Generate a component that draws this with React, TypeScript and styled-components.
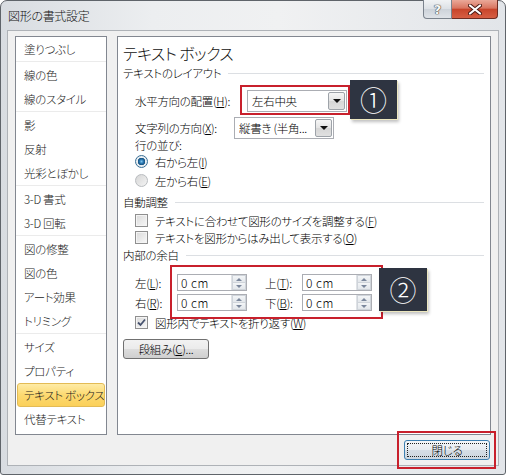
import { styled, createGlobalStyle } from "styled-components";

const Global = createGlobalStyle`
  html, body {
    margin: 0;
    padding: 0;
    background: #ffffff;
  }
  body {
    font-family: "Noto Sans CJK JP", "Noto Sans", sans-serif;
    font-size: 11.5px;
    font-weight: 300;
    letter-spacing: -0.3px;
    font-feature-settings: "palt";
    color: #000;
  }
`;

const Window = styled.div`
  position: relative;
  width: 506px;
  height: 475px;
  box-sizing: border-box;
  border: 1px solid #5f646a;
  border-radius: 7px 7px 3px 3px;
  background: linear-gradient(
    90deg,
    #d8dce1 0%,
    #eceef0 30%,
    #f0f1f2 55%,
    #e2e5e9 100%
  );
  padding: 0 6px 8px 6px;
  display: flex;
  flex-direction: column;
`;

const TitleBar = styled.div`
  height: 29px;
  display: flex;
  align-items: flex-start;
  justify-content: space-between;
`;

const Title = styled.div`
  line-height: 29px;
  padding-left: 1px;
  font-size: 12px;
  color: #111;
`;

const Caption = styled.div`
  display: flex;
  margin-top: -1px;
  margin-right: 1px;
`;

const HelpButton = styled.div`
  width: 29px;
  height: 19px;
  box-sizing: border-box;
  border: 1px solid #7b838d;
  border-top: none;
  border-radius: 0 0 0 4px;
  background: linear-gradient(#f1f3f5, #dde1e6 48%, #cdd3da 52%, #dfe3e8);
  display: flex;
  align-items: center;
  justify-content: center;
  font-family: "DejaVu Sans", sans-serif;
  font-weight: bold;
  font-size: 13px;
  letter-spacing: 0;
  color: #f8f8f8;
  text-shadow: 0 0 1px #444, 0 0 1px #444, 0 0 1px #444;
`;

const CloseButton = styled.div`
  width: 46px;
  height: 19px;
  box-sizing: border-box;
  border: 1px solid #6e2c22;
  border-left: none;
  border-top: none;
  border-radius: 0 0 4px 0;
  background: linear-gradient(#eaa999, #d97560 45%, #c8452b 52%, #d65e43);
  display: flex;
  align-items: center;
  justify-content: center;
`;

const Client = styled.div`
  flex: 1;
  border: 1px solid #aeb2b7;
  background: #f0f0f0;
  padding: 5px 7px 0 7px;
  display: flex;
  flex-direction: column;
`;

const Body = styled.div`
  height: 399px;
  display: flex;
  gap: 10px;
`;

const CategoryList = styled.div`
  width: 92px;
  box-sizing: border-box;
  border: 1px solid #828790;
  background: #fff;
`;

const Group = styled.div`
  & + & {
    border-top: 1px solid #ebebeb;
    padding-top: 1px;
  }
`;

const Category = styled.div<{ $selected?: boolean }>`
  height: 24px;
  box-sizing: border-box;
  margin: 0 1px;
  padding-left: 6px;
  line-height: 22px;
  border: 1px solid ${(p) => (p.$selected ? "#e3bb55" : "transparent")};
  border-radius: 3px;
  background: ${(p) =>
    p.$selected ? "linear-gradient(#feeba6, #fcd970 50%, #fbd05a)" : "none"};
  color: #1b1b1b;
  white-space: nowrap;
  overflow: hidden;
`;

const Panel = styled.div`
  flex: 1;
  box-sizing: border-box;
  border: 1px solid #828790;
  background: #fff;
  padding: 5px 6px 0 5px;
  display: flex;
  flex-direction: column;
`;

const Heading = styled.div`
  height: 22px;
  line-height: 22px;
  font-size: 16px;
  letter-spacing: -0.6px;
  color: #111;
`;

const Section = styled.div<{ $mt?: number }>`
  height: 18px;
  margin-top: ${(p) => p.$mt ?? 0}px;
  display: flex;
  align-items: center;
  gap: 7px;
  white-space: nowrap;
  &::after {
    content: "";
    flex: 1;
    height: 1px;
    background: #dcdfe3;
  }
`;

const Row = styled.div<{ $mt?: number }>`
  height: 22px;
  margin-top: ${(p) => p.$mt ?? 0}px;
  margin-left: 12px;
  display: flex;
  align-items: center;
  white-space: nowrap;
`;

const RowLabel = styled.span<{ $w: number }>`
  width: ${(p) => p.$w}px;
  flex-shrink: 0;
`;

const OptionRow = styled.label<{ $mt?: number; $h?: number }>`
  height: ${(p) => p.$h ?? 17}px;
  margin-top: ${(p) => p.$mt ?? 0}px;
  margin-left: 12px;
  display: flex;
  align-items: center;
  gap: 7px;
  white-space: nowrap;
`;

const SubLabel = styled.div`
  height: 13px;
  line-height: 13px;
  margin-left: 12px;
`;

const Key = styled.span`
  text-decoration: underline;
  text-underline-offset: 1px;
`;

const Select = styled.div<{ $w: number }>`
  width: ${(p) => p.$w}px;
  height: 22px;
  box-sizing: border-box;
  border: 1px solid #abadb3;
  background: #fff;
  display: flex;
  align-items: center;
  padding: 1px 1px 1px 4px;
`;

const SelectText = styled.span`
  flex: 1;
  overflow: hidden;
  white-space: nowrap;
`;

const ArrowButton = styled.span`
  width: 17px;
  height: 18px;
  box-sizing: border-box;
  border: 1px solid #9ea3a9;
  border-radius: 2px;
  background: linear-gradient(#f6f6f6, #e4e4e4 50%, #d6d6d6 51%, #e0e0e0);
  display: flex;
  align-items: center;
  justify-content: center;
  &::before {
    content: "";
    border-left: 4px solid transparent;
    border-right: 4px solid transparent;
    border-top: 4px solid #111;
  }
`;

const Radio = styled.span<{ $on?: boolean }>`
  width: 13px;
  height: 13px;
  box-sizing: border-box;
  border-radius: 50%;
  border: 1px solid ${(p) => (p.$on ? "#3a6f95" : "#b9bcbf")};
  background: ${(p) =>
    p.$on
      ? "radial-gradient(circle, #7fc3ec 0, #2a77b0 2px, #17507d 3.5px, #e9eef2 4px)"
      : "linear-gradient(135deg, #d6d6d6, #f4f4f4)"};
`;

const Check = styled.span`
  width: 13px;
  height: 13px;
  box-sizing: border-box;
  border: 1px solid #8f8f8f;
  background: linear-gradient(135deg, #d9d9d9, #f8f8f8);
  box-shadow: inset 0 0 0 1px #f4f4f4;
  display: flex;
  align-items: center;
  justify-content: center;
`;

const SpinGrid = styled.div<{ $mt: number }>`
  margin-top: ${(p) => p.$mt}px;
  margin-left: 12px;
  height: 17px;
  display: grid;
  grid-template-columns: 42px 88px 37px 70px;
  align-items: center;
  white-space: nowrap;
`;

const SpinBox = styled.div`
  width: 70px;
  height: 17px;
  box-sizing: border-box;
  border: 1px solid #abadb3;
  background: #fff;
  display: flex;
  align-items: stretch;
`;

const SpinText = styled.span`
  flex: 1;
  padding-left: 3px;
  line-height: 15px;
  font-size: 12px;
  letter-spacing: 0.5px;
`;

const Spinner = styled.span`
  width: 14px;
  display: flex;
  flex-direction: column;
  border-left: 1px solid #dfe2e6;
`;

const SpinHalf = styled.span<{ $down?: boolean }>`
  flex: 1;
  background: linear-gradient(#f3f5f7, #e3e7eb);
  border: 1px solid #cfd4da;
  ${(p) => (p.$down ? "border-top: none;" : "")}
  display: flex;
  align-items: center;
  justify-content: center;
  &::before {
    content: "";
    border-left: 3px solid transparent;
    border-right: 3px solid transparent;
    ${(p) =>
      p.$down ? "border-top: 3px solid #7b879c;" : "border-bottom: 3px solid #7b879c;"}
  }
`;

const PushButton = styled.div<{ $w: number; $mt?: number; $default?: boolean }>`
  width: ${(p) => p.$w}px;
  height: 20px;
  margin-top: ${(p) => p.$mt ?? 0}px;
  box-sizing: border-box;
  border: 1px solid ${(p) => (p.$default ? "#3c7fb1" : "#707070")};
  border-radius: 3px;
  background: ${(p) =>
    p.$default
      ? "linear-gradient(#f3f6f9, #e6ebf0 50%, #d6dee6 51%, #ccd6df)"
      : "linear-gradient(#f2f2f2, #ebebeb 50%, #dddddd 51%, #cfcfcf)"};
  display: flex;
  padding: 2px;
  white-space: nowrap;
`;

const ButtonFace = styled.span<{ $focus?: boolean }>`
  flex: 1;
  display: flex;
  align-items: center;
  justify-content: center;
  border: 1px dotted ${(p) => (p.$focus ? "#222" : "transparent")};
  line-height: 14px;
`;

const Footer = styled.div`
  flex: 1;
  display: flex;
  justify-content: flex-end;
  align-items: flex-start;
  padding: 5px 1px 0 0;
`;

const Marker = styled.div`
  position: absolute;
  box-sizing: border-box;
  border: 2px solid #c8202c;
  pointer-events: none;
`;

const Callout = styled.div`
  position: absolute;
  box-sizing: border-box;
  background: #2e3441;
  color: #fff;
  display: flex;
  align-items: center;
  justify-content: center;
  font-size: 27px;
  font-weight: 300;
  letter-spacing: 0;
  box-shadow: 1px 1px 0 #ece7bf, 2px 3px 3px rgba(0, 0, 0, 0.25);
`;

const groups = [
  ["塗りつぶし"],
  ["線の色", "線のスタイル"],
  ["影", "反射", "光彩とぼかし"],
  ["3-D 書式", "3-D 回転"],
  ["図の修整", "図の色", "アート効果", "トリミング"],
  ["サイズ", "プロパティ", "テキスト ボックス", "代替テキスト"],
];

const selected = "テキスト ボックス";

// annotation boxes, in window coordinates
const markers = [
  { x: 240, y: 85, w: 110, h: 30 },
  { x: 170, y: 265, w: 213, h: 54 },
  { x: 397, y: 431, w: 99, h: 38 },
];

const callouts = [
  { x: 350, y: 80, w: 47, h: 39, label: "①" },
  { x: 379, y: 268, w: 48, h: 43, label: "②" },
];

function CheckMark() {
  return (
    <svg width="9" height="9" viewBox="0 0 9 9">
      <path
        d="M1 4.5 L3.5 7 L8 1.5"
        fill="none"
        stroke="#46526e"
        strokeWidth="1.8"
      />
    </svg>
  );
}

function Spin({ value }: { value: string }) {
  return (
    <SpinBox>
      <SpinText>{value}</SpinText>
      <Spinner>
        <SpinHalf />
        <SpinHalf $down />
      </Spinner>
    </SpinBox>
  );
}

export default function App() {
  return (
    <>
      <Global />
      <Window>
        <TitleBar>
          <Title>図形の書式設定</Title>
          <Caption>
            <HelpButton>?</HelpButton>
            <CloseButton>
              <svg width="14" height="11" viewBox="0 0 14 11">
                <path
                  d="M2 1.5 L12 9.5 M12 1.5 L2 9.5"
                  stroke="#4a1a14"
                  strokeWidth="4"
                  strokeLinecap="round"
                />
                <path
                  d="M2 1.5 L12 9.5 M12 1.5 L2 9.5"
                  stroke="#fff"
                  strokeWidth="2.2"
                  strokeLinecap="round"
                />
              </svg>
            </CloseButton>
          </Caption>
        </TitleBar>

        <Client>
          <Body>
            <CategoryList>
              {groups.map((g, i) => (
                <Group key={i}>
                  {g.map((name) => (
                    <Category key={name} $selected={name === selected}>
                      {name}
                    </Category>
                  ))}
                </Group>
              ))}
            </CategoryList>

            <Panel>
              <Heading>テキスト ボックス</Heading>
              <Section>テキストのレイアウト</Section>

              <Row $mt={8}>
                <RowLabel $w={112}>
                  水平方向の配置(<Key>H</Key>):
                </RowLabel>
                <Select $w={100}>
                  <SelectText>左右中央</SelectText>
                  <ArrowButton />
                </Select>
              </Row>
              <Row $mt={5}>
                <RowLabel $w={99}>
                  文字列の方向(<Key>X</Key>):
                </RowLabel>
                <Select $w={100}>
                  <SelectText>縦書き (半角...</SelectText>
                  <ArrowButton />
                </Select>
              </Row>

              <SubLabel>行の並び:</SubLabel>
              <OptionRow $h={19}>
                <Radio $on />
                <span>
                  右から左(<Key>I</Key>)
                </span>
              </OptionRow>
              <OptionRow $h={19}>
                <Radio />
                <span>
                  左から右(<Key>E</Key>)
                </span>
              </OptionRow>

              <Section $mt={3}>自動調整</Section>
              <OptionRow $mt={1}>
                <Check />
                <span>
                  テキストに合わせて図形のサイズを調整する(<Key>F</Key>)
                </span>
              </OptionRow>
              <OptionRow>
                <Check />
                <span>
                  テキストを図形からはみ出して表示する(<Key>O</Key>)
                </span>
              </OptionRow>

              <Section>内部の余白</Section>
              <SpinGrid $mt={10}>
                <span>
                  左(<Key>L</Key>):
                </span>
                <Spin value="0 cm" />
                <span>
                  上(<Key>T</Key>):
                </span>
                <Spin value="0 cm" />
              </SpinGrid>
              <SpinGrid $mt={3}>
                <span>
                  右(<Key>R</Key>):
                </span>
                <Spin value="0 cm" />
                <span>
                  下(<Key>B</Key>):
                </span>
                <Spin value="0 cm" />
              </SpinGrid>

              <OptionRow $mt={3}>
                <Check>
                  <CheckMark />
                </Check>
                <span>
                  図形内でテキストを折り返す(<Key>W</Key>)
                </span>
              </OptionRow>

              <PushButton $w={86} $mt={8}>
                <ButtonFace>
                  段組み(<Key>C</Key>)...
                </ButtonFace>
              </PushButton>
            </Panel>
          </Body>

          <Footer>
            <PushButton $w={86} $default>
              <ButtonFace $focus>閉じる</ButtonFace>
            </PushButton>
          </Footer>
        </Client>

        {markers.map((m, i) => (
          <Marker
            key={i}
            style={{ left: m.x - 1, top: m.y - 1, width: m.w, height: m.h }}
          />
        ))}
        {callouts.map((c) => (
          <Callout
            key={c.label}
            style={{ left: c.x - 1, top: c.y - 1, width: c.w, height: c.h }}
          >
            {c.label}
          </Callout>
        ))}
      </Window>
    </>
  );
}
